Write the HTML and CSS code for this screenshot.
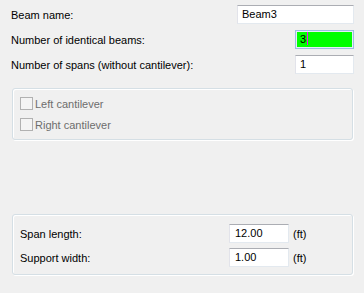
FILE: index.html
```html
<!DOCTYPE html>
<html lang="en">
<head>
    <meta charset="UTF-8">
    <title>Beam</title>
    <link rel="stylesheet" href="styles.css">
</head>
<body>
    <div class="form">
        <div class="row">
            <span class="label">Beam name:</span>
            <div class="textbox wide">Beam3</div>
        </div>
        <div class="row">
            <span class="label">Number of identical beams:</span>
            <div class="textbox small focused">3<span class="caret"></span></div>
        </div>
        <div class="row">
            <span class="label">Number of spans (without cantilever):</span>
            <div class="textbox small">1</div>
        </div>
    </div>

    <div class="group cantilevers">
        <div class="check"><span class="box"></span>Left cantilever</div>
        <div class="check"><span class="box"></span>Right cantilever</div>
    </div>

    <div class="group spans">
        <div class="row">
            <span class="label">Span length:</span>
            <div class="textbox unit">12.00</div>
            <span class="ft">(ft)</span>
        </div>
        <div class="row">
            <span class="label">Support width:</span>
            <div class="textbox unit">1.00</div>
            <span class="ft">(ft)</span>
        </div>
    </div>
</body>
</html>
```

FILE: styles.css
```css
body {
    margin: 0;
    width: 364px;
    height: 293px;
    background-color: #f0f0f0;
    font-family: "Liberation Sans", Arial, sans-serif;
    font-size: 11px;
    color: #000;
}

.form {
    display: flex;
    flex-direction: column;
    gap: 6px;
    padding: 5px 10px 0 11px;
}

.row {
    display: flex;
    align-items: center;
    height: 19px;
}

.label {
    flex: 1;
}

.textbox {
    box-sizing: border-box;
    height: 19px;
    padding-left: 4px;
    line-height: 17px;
    background-color: #fff;
    border: 1px solid #e3e9ef;
    border-top-color: #abadb3;
    border-left-color: #e2e3ea;
}

.wide {
    width: 117px;
}

.small {
    width: 59px;
}

.focused {
    border-color: #9cbde0;
    background-color: #00ff00;
    box-shadow: inset 0 0 0 1px #e6eef8;
    padding-left: 4px;
}

.caret {
    display: inline-block;
    width: 1px;
    height: 13px;
    margin-left: 1px;
    vertical-align: -2px;
    background-color: #ff00ff;
}

.group {
    box-sizing: border-box;
    width: 341px;
    margin-left: 12px;
    border: 1px solid #d5dfe5;
    border-radius: 3px;
    box-shadow: 1px 1px 0 #fff, inset 1px 1px 0 #fff;
}

.cantilevers {
    height: 52px;
    margin-top: 14px;
    padding: 8px 0 0 7px;
    display: flex;
    flex-direction: column;
    gap: 8px;
}

.check {
    display: flex;
    align-items: center;
    height: 13px;
    color: #6d6d6d;
}

.box {
    box-sizing: border-box;
    width: 13px;
    height: 13px;
    margin-right: 2px;
    border: 1px solid #b1b1b1;
    background-color: #f4f4f4;
}

.spans {
    height: 61px;
    margin-top: 74px;
    padding: 9px 0 0 7px;
    display: flex;
    flex-direction: column;
    gap: 5px;
}

.unit {
    width: 60px;
    padding-left: 5px;
}

.ft {
    width: 59px;
    padding-left: 4px;
}
```
